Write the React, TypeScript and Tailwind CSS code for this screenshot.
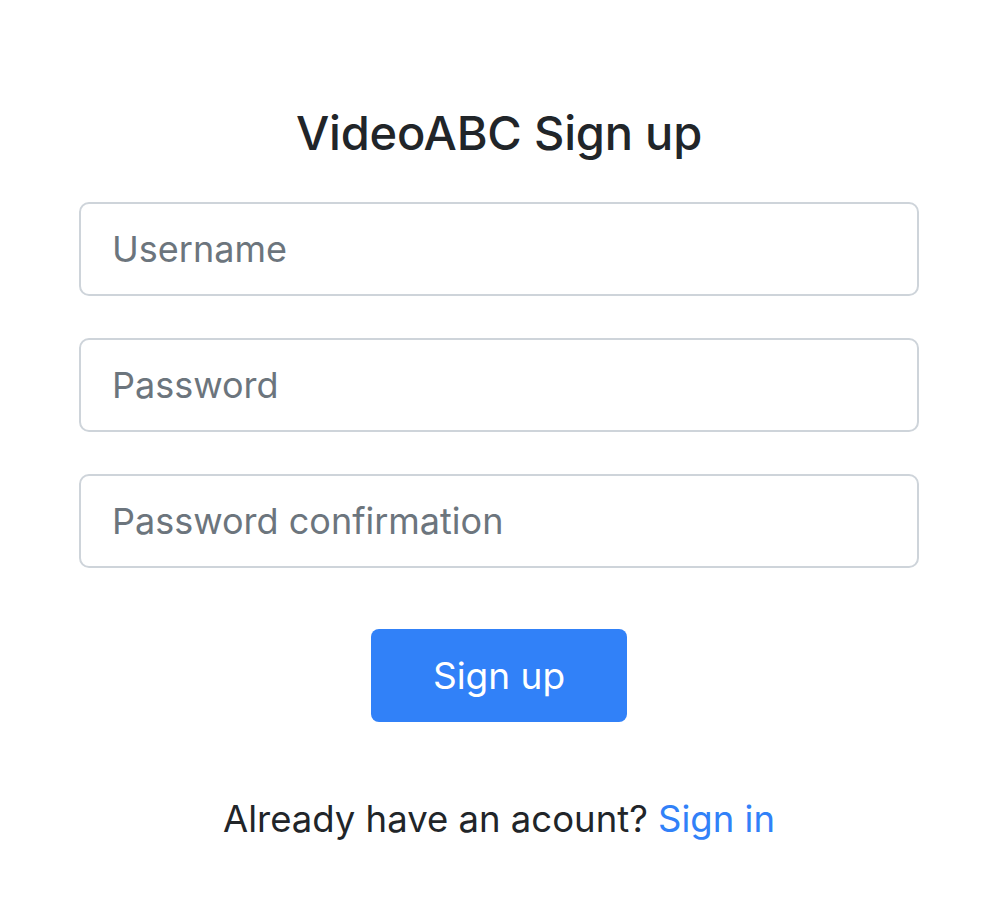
import { useState } from "react";

const FONT = "font-['Inter','Liberation_Sans',sans-serif]";

type Field = { name: string; placeholder: string; type: string };

const FIELDS: Field[] = [
  { name: "username", placeholder: "Username", type: "text" },
  { name: "password", placeholder: "Password", type: "password" },
  { name: "password_confirmation", placeholder: "Password confirmation", type: "password" },
];

export default function App() {
  const [values, setValues] = useState<Record<string, string>>({});

  return (
    <div className={`min-h-screen bg-white ${FONT} text-[#212529]`}>
      <div className="mx-auto w-[840px] pt-[105px]">
        <h1 className="text-center text-[47px] font-medium leading-[1.2] tracking-[-0.2px]">VideoABC Sign up</h1>

        <form className="mt-[41px] flex flex-col gap-[42px]" onSubmit={(e) => e.preventDefault()}>
          {FIELDS.map((f) => (
            <input
              key={f.name}
              type={f.type}
              name={f.name}
              value={values[f.name] ?? ""}
              onChange={(e) => setValues((prev) => ({ ...prev, [f.name]: e.target.value }))}
              placeholder={f.placeholder}
              className="h-[94px] w-full rounded-[10px] border-2 border-[#ced4da] px-[31px] text-[36px] text-[#495057] outline-none placeholder:text-[#6c757d]"
            />
          ))}

          <div className="mt-[19px] flex justify-center">
            <button
              type="submit"
              className="h-[93px] w-[256px] rounded-[8px] bg-[#3181f8] text-[37px] text-white"
            >
              Sign up
            </button>
          </div>
        </form>

        <p className="mt-[70px] text-center text-[36.5px] leading-[1.5]">
          Already have an acount? <a href="#" className="text-[#3181f8]">Sign in</a>
        </p>
      </div>
    </div>
  );
}
